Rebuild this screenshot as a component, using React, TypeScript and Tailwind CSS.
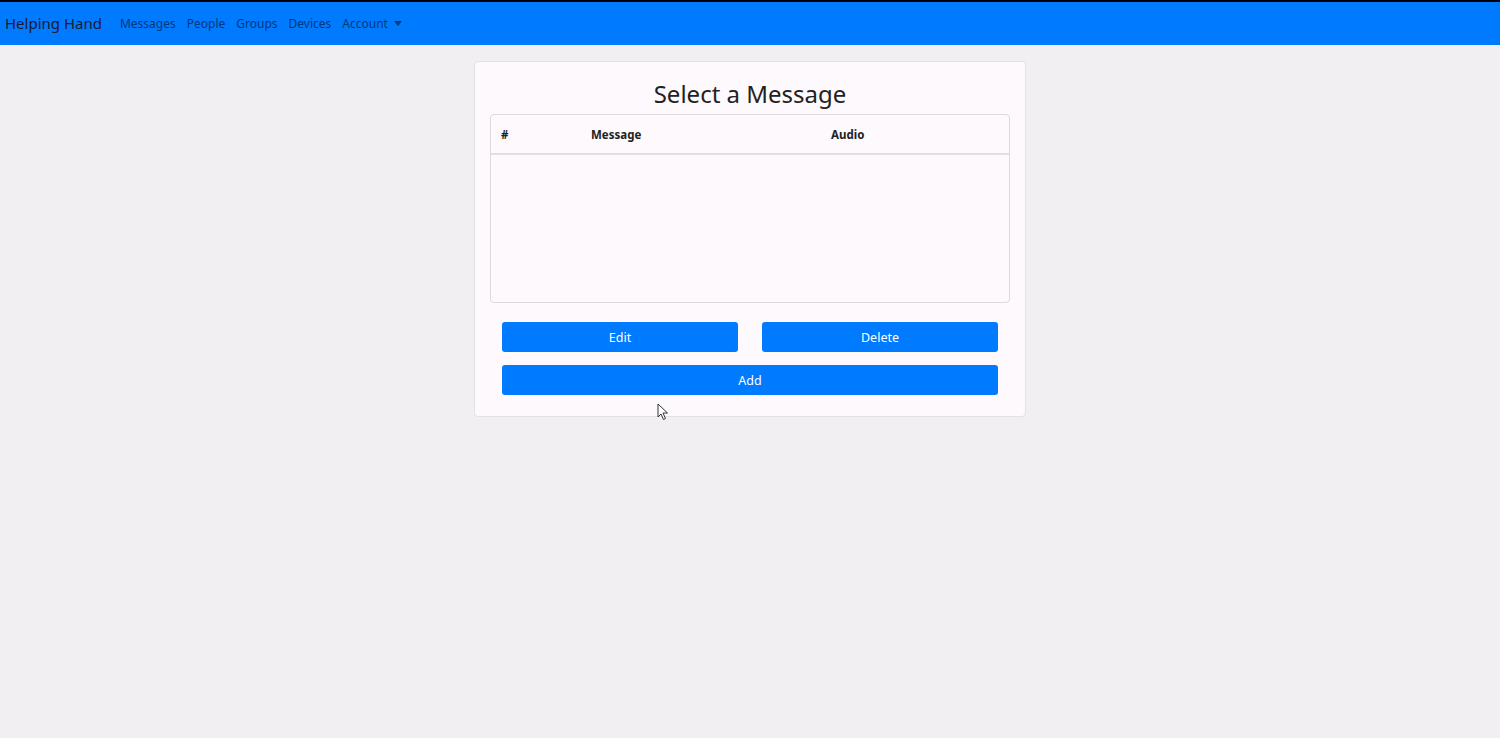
import React from "react";

const navLinks = ["Messages", "People", "Groups", "Devices"];

export default function App() {
  return (
    <div
      className="min-h-[738px] bg-[#f2eff2] relative"
      style={{ fontFamily: '"Noto Sans", "Open Sans", sans-serif' }}
    >
      {/* Navbar */}
      <nav className="h-[45px] bg-[#007bff] border-t-2 border-black flex items-center px-[5px]">
        <span className="text-[15px] text-[#1a1a2e] mr-[18px] leading-none">Helping Hand</span>
        <div className="flex items-center gap-[11px] text-[12px] text-[#00387a]">
          {navLinks.map((l) => (
            <span key={l}>{l}</span>
          ))}
          <span className="flex items-center gap-[6px]">
            Account
            <span className="w-0 h-0 border-l-[4px] border-r-[4px] border-t-[5px] border-l-transparent border-r-transparent border-t-[#00387a]" />
          </span>
        </div>
      </nav>

      {/* Card */}
      <div className="flex justify-center pt-[16px]">
        <div className="w-[552px] bg-[#fdf9fd] border border-[#e4e0e4] rounded-[4px] px-[15px] pt-[14px] pb-[21px]">
          <h1 className="text-center text-[24px] text-[#222] leading-[36px] mb-[2px]">Select a Message</h1>

          {/* Table */}
          <div className="h-[189px] border border-[#ddd9dd] rounded-[4px] bg-[#fdf9fd]">
            <div className="h-[40px] pt-[2px] border-b-2 border-[#e2dee2] flex items-center text-[11.5px] font-bold text-[#222]">
              <div className="w-[90px] pl-[10px]">#</div>
              <div className="w-[240px] pl-[10px]">Message</div>
              <div className="flex-1 pl-[10px]">Audio</div>
            </div>
          </div>

          {/* Buttons */}
          <div className="px-[12px] pt-[19px] flex flex-col gap-[13px]">
            <div className="flex gap-[24px]">
              <button className="flex-1 h-[30px] pt-[2px] bg-[#007bff] rounded-[3px] text-white text-[12.5px]">Edit</button>
              <button className="flex-1 h-[30px] pt-[2px] bg-[#007bff] rounded-[3px] text-white text-[12.5px]">Delete</button>
            </div>
            <button className="h-[30px] pt-[2px] bg-[#007bff] rounded-[3px] text-white text-[12.5px]">Add</button>
          </div>
        </div>
      </div>

      {/* Mouse cursor */}
      <svg className="absolute left-[657px] top-[403px]" width="12" height="18" viewBox="0 0 12 18">
        <path d="M1 1 L1 14 L4 11 L6.5 16.5 L8.5 15.5 L6 10 L10.5 10 Z" fill="#fff" stroke="#333" strokeWidth="1" strokeLinejoin="round" />
      </svg>
    </div>
  );
}
